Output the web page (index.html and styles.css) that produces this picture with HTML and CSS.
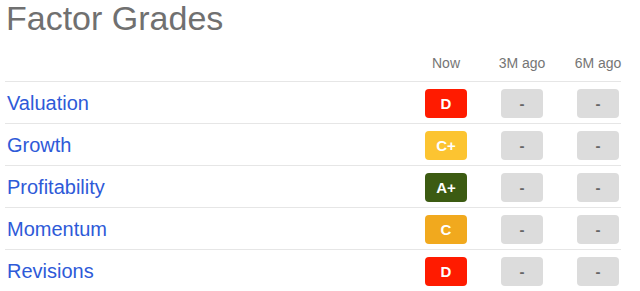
FILE: index.html
```html
<!DOCTYPE html>
<html>
<head>
<meta charset="utf-8">
<link rel="stylesheet" href="styles.css">
</head>
<body>
<div class="panel">
  <h1 class="title">Factor Grades</h1>
  <div class="table">
    <div class="row head">
      <div class="label"></div>
      <div class="col">Now</div>
      <div class="col">3M ago</div>
      <div class="col">6M ago</div>
    </div>
    <div class="row">
      <div class="label">Valuation</div>
      <div class="badge g-d">D</div>
      <div class="badge g-na">-</div>
      <div class="badge g-na">-</div>
    </div>
    <div class="row">
      <div class="label">Growth</div>
      <div class="badge g-cp">C+</div>
      <div class="badge g-na">-</div>
      <div class="badge g-na">-</div>
    </div>
    <div class="row">
      <div class="label">Profitability</div>
      <div class="badge g-ap">A+</div>
      <div class="badge g-na">-</div>
      <div class="badge g-na">-</div>
    </div>
    <div class="row">
      <div class="label">Momentum</div>
      <div class="badge g-c">C</div>
      <div class="badge g-na">-</div>
      <div class="badge g-na">-</div>
    </div>
    <div class="row last">
      <div class="label">Revisions</div>
      <div class="badge g-d">D</div>
      <div class="badge g-na">-</div>
      <div class="badge g-na">-</div>
    </div>
  </div>
</div>
</body>
</html>
```
FILE: styles.css
```css
html, body {
  margin: 0;
  padding: 0;
  background: #ffffff;
  font-family: "Liberation Sans", Arial, sans-serif;
}
.panel {
  width: 616px;
  padding: 0 19px 0 5px;
}
.title {
  margin: 0;
  padding-left: 1px;
  font-size: 34px;
  font-weight: normal;
  line-height: 36px;
  color: #707070;
  height: 36px;
}
.row {
  display: grid;
  grid-template-columns: 1fr 42px 42px 42px;
  column-gap: 34px;
  padding-right: 2px;
  align-items: center;
  height: 41px;
  border-bottom: 1px solid #e6e6e6;
}
.row.head {
  height: 45px;
  align-items: end;
}
.row.last {
  border-bottom: none;
}
.col {
  justify-self: center;
  white-space: nowrap;
  font-size: 14px;
  color: #757575;
  line-height: 16px;
  padding-bottom: 10px;
}
.label {
  padding-left: 2px;
  font-size: 20px;
  color: #2e5ad8;
  line-height: 22px;
  padding-top: 1px;
}
.badge {
  height: 29px;
  width: 42px;
  border-radius: 4px;
  display: flex;
  align-items: center;
  justify-content: center;
  font-size: 15px;
  font-weight: bold;
  color: #ffffff;
  margin-top: 1px;
}
.g-d { background: #ff1b00; }
.g-cp { background: #fcc431; }
.g-ap { background: #3c5b12; }
.g-c { background: #f1a91e; }
.g-na { background: #dcdcdc; color: #666666; }
```
